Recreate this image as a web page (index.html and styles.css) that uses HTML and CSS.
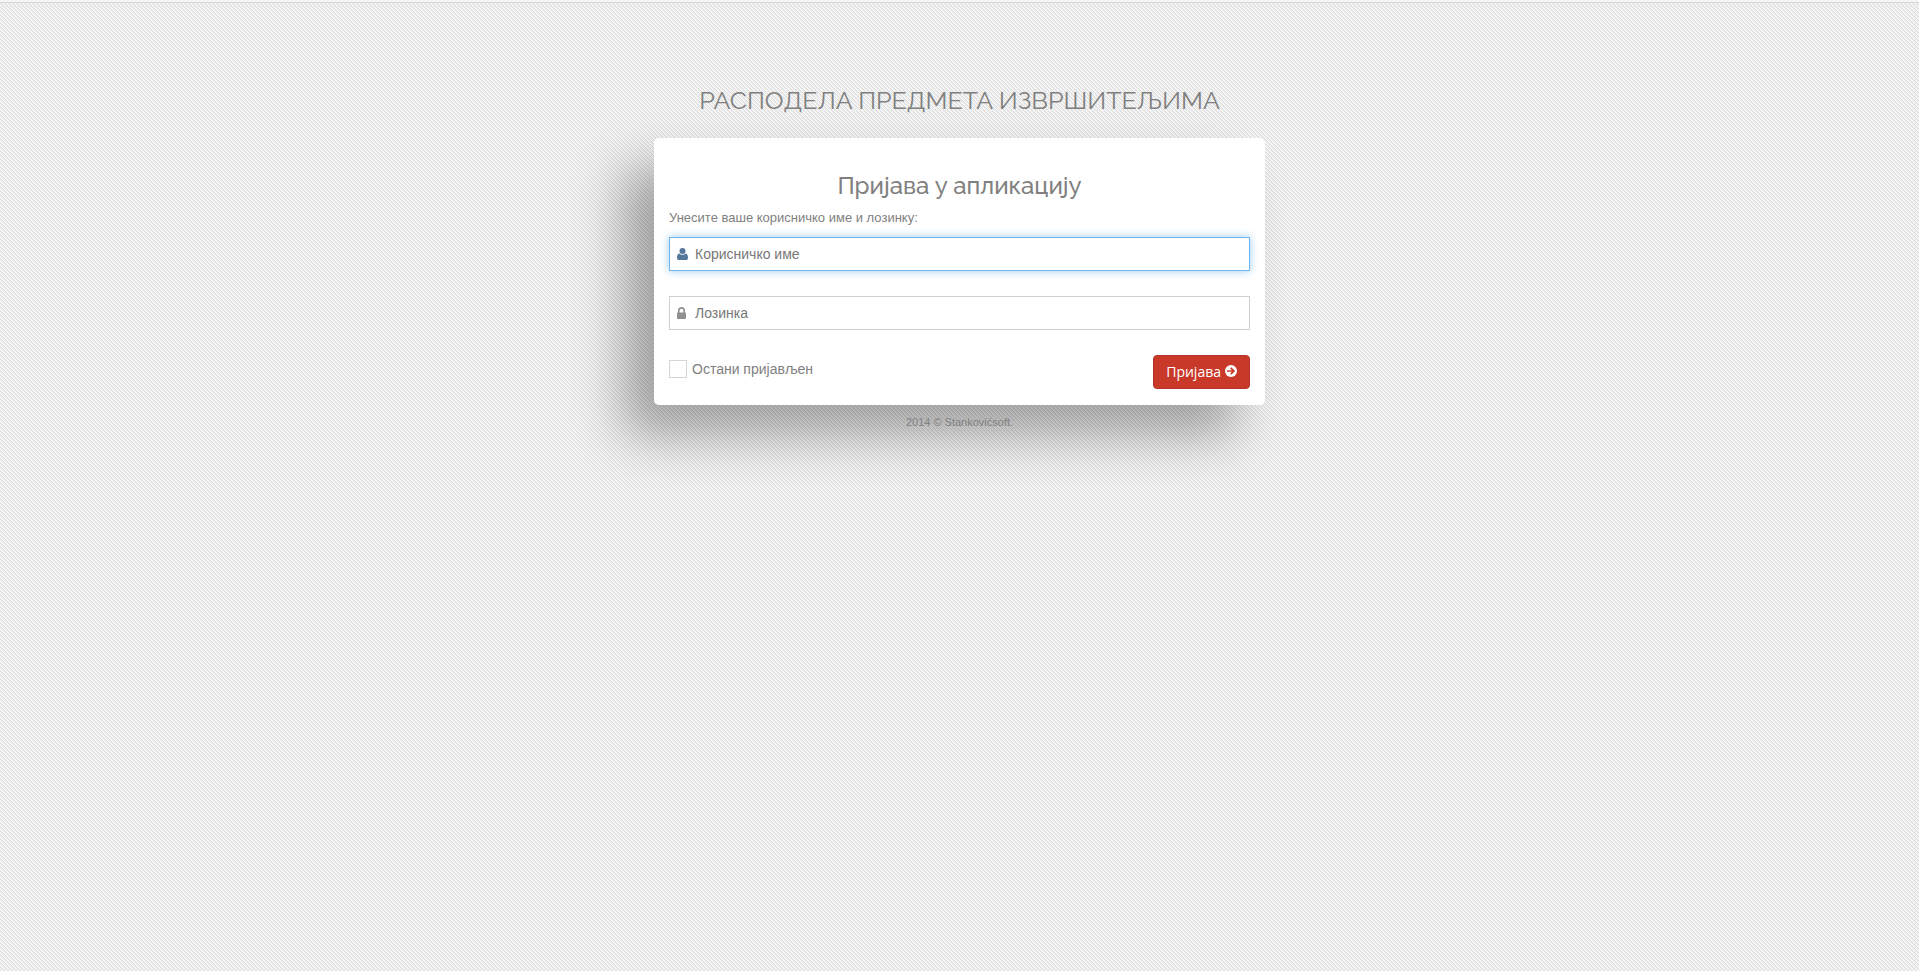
FILE: index.html
```html
<!DOCTYPE html>
<html lang="sr">
<head>
    <meta charset="UTF-8">
    <meta name="viewport" content="width=device-width, initial-scale=1.0">
    <title>Пријава</title>
    <link rel="stylesheet" href="styles.css">
</head>
<body class="login">
    <header class="top-line"></header>

    <main class="container">
        <h1 class="app-title">РАСПОДЕЛА ПРЕДМЕТА ИЗВРШИТЕЉИМА</h1>

        <form class="login-box" method="post">
            <h2 class="box-title">Пријава у апликацију</h2>
            <p class="hint">Унесите ваше корисничко име и лозинку:</p>

            <div class="field">
                <svg class="icon" viewBox="0 0 12 12" aria-hidden="true">
                    <circle cx="5.5" cy="3" r="3"/>
                    <path d="M2.400 5.500C.8 5.700 0 7.400 0 9.700 0 11.200.9 12 2.100 12h6.800c1.200 0 2.100-.8 2.100-2.300 0-2.300-.8-4-2.400-4.200C7.800 6.300 6.700 6.800 5.500 6.800S3.200 6.300 2.400 5.500z"/>
                </svg>
                <input type="text" class="control" name="username" aria-label="Корисничко име" placeholder="Корисничко име" autofocus>
            </div>

            <div class="field">
                <svg class="icon" viewBox="0 0 12 12" aria-hidden="true">
                    <path fill-rule="evenodd" d="M1 5.500V3.600a3.500 3.500 0 0 1 7 0v1.900h.2c.5 0 .8.3.8.8v4.900c0 .5-.3.8-.8.8H.8C.3 12 0 11.700 0 11.200V6.300c0-.5.3-.8.8-.8zM2.600 5.500h3.800V3.600a1.900 1.900 0 0 0-3.800 0z"/>
                </svg>
                <input type="password" class="control" name="password" aria-label="Лозинка" placeholder="Лозинка">
            </div>

            <div class="actions">
                <label class="remember">
                    <input type="checkbox" class="check" name="remember">
                    Остани пријављен
                </label>
                <button type="submit" class="btn">
                    Пријава
                    <svg class="btn-icon" viewBox="0 0 12 12" aria-hidden="true">
                        <circle cx="6" cy="6" r="6" fill="#fff"/>
                        <path d="M2 6h6.800M5.700 2.800L8.900 6 5.700 9.200" fill="none" stroke="#c9392a" stroke-width="1.700"/>
                    </svg>
                </button>
            </div>
        </form>

        <footer class="copyright">2014 © Stankovićsoft.</footer>
    </main>
</body>
</html>
```

FILE: styles.css
```css
* {
    box-sizing: border-box;
}
body {
    margin: 0;
    min-height: 100vh;
    font-family: "Liberation Sans", Arial, sans-serif;
    font-size: 14px;
    line-height: 20px;
    color: #808080;
}
/* fine checker with a faint diagonal weave over it */
.login {
    background-color: #f8f8f8;
    background-image:
        linear-gradient(45deg, rgba(0, 0, 0, 0.07) 25%, transparent 25%, transparent 50%, rgba(0, 0, 0, 0.07) 50%, rgba(0, 0, 0, 0.07) 75%, transparent 75%),
        conic-gradient(#fcfcfc 25%, #eeeeee 25%, #eeeeee 50%, #fcfcfc 50%, #fcfcfc 75%, #eeeeee 75%);
    background-size: 4px 4px, 2px 2px;
}
.top-line {
    height: 3px;
    background-color: #f5f5f5;
    border-bottom: 1px solid #d8d8d8;
}
.container {
    max-width: 611px;
    margin: 0 auto;
    padding-top: 80px;
}
.app-title {
    margin: 0 0 21px;
    font-family: Raleway, Lato, sans-serif;
    font-size: 25px;
    font-weight: 400;
    line-height: 34px;
    text-align: center;
    white-space: nowrap;
}
.login-box {
    padding: 32px 15px 16px;
    background-color: #fff;
    border-radius: 5px;
    box-shadow: -30px 30px 50px rgba(0, 0, 0, 0.32);
}
.box-title {
    margin: 0;
    font-family: Raleway, Lato, sans-serif;
    font-size: 24px;
    font-weight: 500;
    line-height: 32px;
    text-align: center;
}
.hint {
    margin: 6px 0 9px;
    font-size: 13px;
}
.field {
    position: relative;
    margin-bottom: 25px;
}
.icon {
    position: absolute;
    top: 11px;
    left: 8px;
    width: 12px;
    height: 12px;
    fill: #909090;
}
.field:focus-within .icon {
    fill: #557799;
}
.control {
    display: block;
    width: 100%;
    height: 34px;
    padding: 6px 12px 6px 25px;
    font: inherit;
    color: #555;
    background-color: #fff;
    border: 1px solid #d0d0d0;
    border-radius: 0;
}
.control::placeholder {
    color: #777;
}
.control:focus {
    border-color: #70b5ee;
    outline: 0;
    box-shadow: 0 0 8px rgba(82, 168, 236, 0.6);
}
.actions {
    display: flex;
    justify-content: space-between;
    align-items: flex-start;
}
.remember {
    display: flex;
    align-items: center;
    gap: 5px;
    padding-top: 4px;
}
.check {
    appearance: none;
    width: 18px;
    height: 18px;
    margin: 0;
    background-color: #fff;
    border: 1px solid #d5d5d5;
}
.check:checked {
    background-color: #c9392a;
}
.btn {
    display: flex;
    align-items: center;
    gap: 4px;
    height: 34px;
    padding: 0 12px 2px;
    font-family: "Open Sans", sans-serif;
    font-size: 14px;
    color: #fff;
    background-color: #c9392a;
    border: 1px solid #b43225;
    border-radius: 4px;
    cursor: pointer;
}
.btn-icon {
    width: 12px;
    height: 12px;
}
.copyright {
    padding-top: 7px;
    font-size: 11px;
    text-align: center;
}
```
